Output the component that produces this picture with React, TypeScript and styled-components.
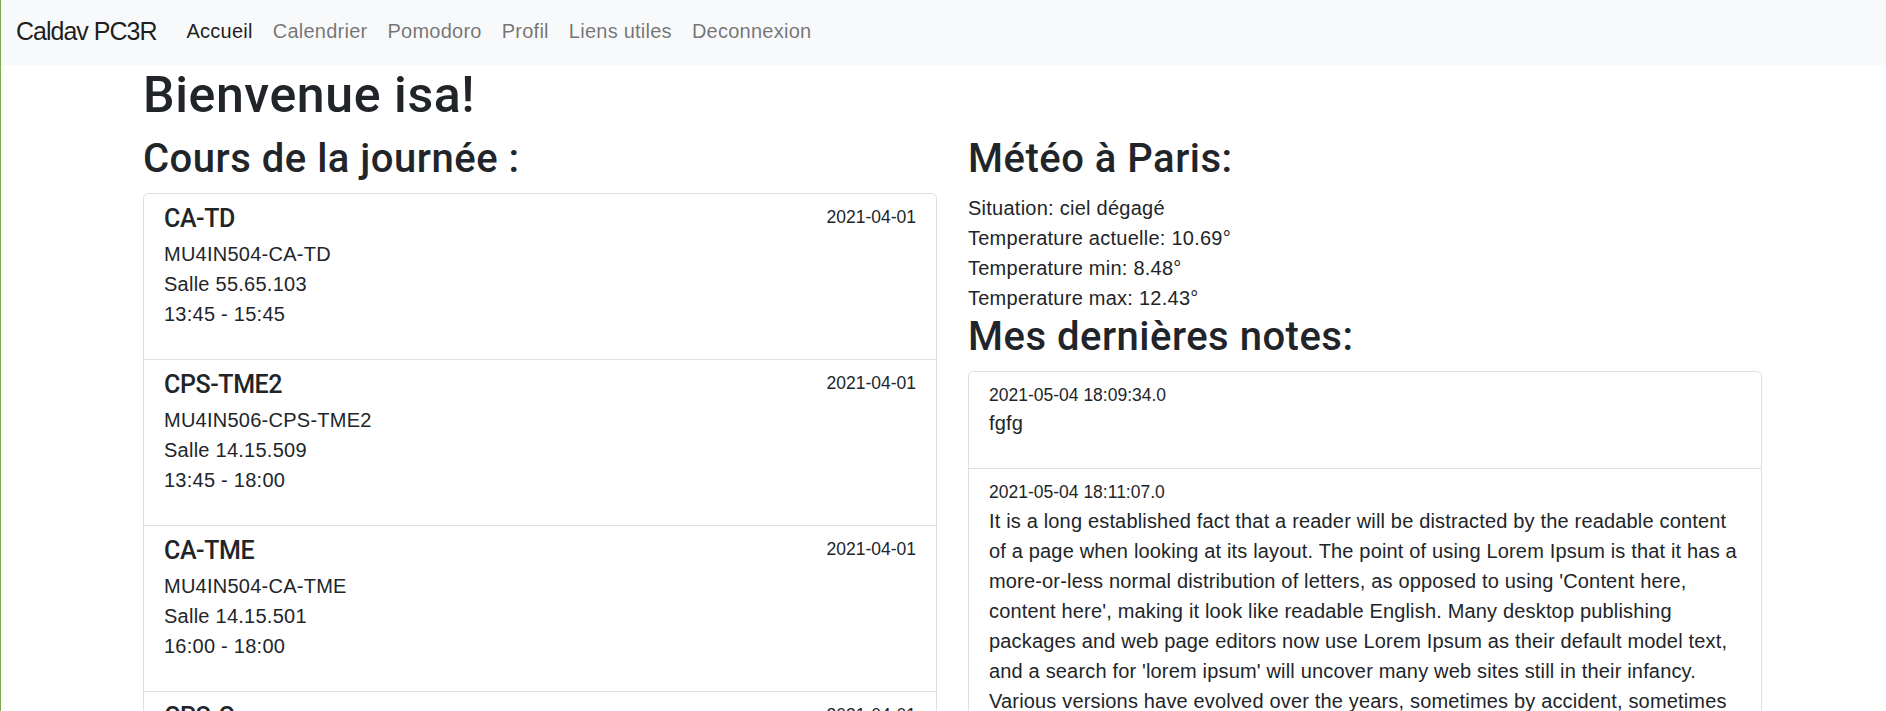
import React from "react";
import styled, { createGlobalStyle } from "styled-components";

const GlobalStyle = createGlobalStyle`
  html, body {
    margin: 0;
    padding: 0;
    background: #ffffff;
  }
  body {
    font-family: "Liberation Sans", Arial, sans-serif;
    font-size: 20px;
    line-height: 30px;
    letter-spacing: 0.25px;
    color: #212529;
  }
  * { box-sizing: border-box; }
`;

const Page = styled.div`
  min-height: 711px;
  border-left: 1px solid #7aab4c;
`;

const NavBar = styled.nav`
  height: 65px;
  background: #f8f9fa;
  display: flex;
  align-items: center;
  padding: 0 15px 4px;
`;

const Brand = styled.a`
  font-size: 25px;
  line-height: 30px;
  color: rgba(0, 0, 0, 0.9);
  margin-right: 20px;
  text-decoration: none;
  letter-spacing: -1px;
`;

const NavList = styled.ul`
  display: flex;
  list-style: none;
  margin: 0;
  padding: 0;
`;

const NavLink = styled.a<{ $active?: boolean }>`
  display: block;
  padding: 10px;
  font-size: 20px;
  line-height: 30px;
  color: ${(p) => (p.$active ? "rgba(0,0,0,0.9)" : "rgba(0,0,0,0.55)")};
  text-decoration: none;
`;

const Main = styled.main`
  padding-left: 142px;
`;

const Title = styled.h1`
  margin: 0 0 10px;
  font-family: Roboto, "Liberation Sans", sans-serif;
  font-weight: 500;
  font-size: 50px;
  line-height: 60px;
  letter-spacing: 0.6px;
`;

const Columns = styled.div`
  display: grid;
  grid-template-columns: 794px 794px;
  column-gap: 31px;
  align-items: start;
`;

const Column = styled.section`
  display: flex;
  flex-direction: column;
`;

const SectionTitle = styled.h2`
  margin: 0 0 10px;
  font-family: Roboto, "Liberation Sans", sans-serif;
  font-weight: 500;
  font-size: 40px;
  line-height: 48px;
  letter-spacing: 0.5px;
`;

const ListGroup = styled.div`
  border: 1px solid rgba(0, 0, 0, 0.125);
  border-radius: 5px;
  display: flex;
  flex-direction: column;
`;

const ListItem = styled.div`
  padding: 10px 20px;
  border-bottom: 1px solid rgba(0, 0, 0, 0.125);
  &:last-child { border-bottom: none; }
`;

const ItemHeader = styled.div`
  display: flex;
  justify-content: space-between;
  align-items: flex-start;
`;

const ItemTitle = styled.h5`
  margin: 0 0 5px;
  font-family: Roboto, "Liberation Sans", sans-serif;
  font-weight: 500;
  font-size: 25px;
  line-height: 30px;
  letter-spacing: -0.4px;
`;

const Small = styled.small`
  display: block;
  font-size: 17.5px;
  line-height: 26.25px;
  letter-spacing: 0;
`;

const Para = styled.p`
  margin: 0 0 20px;
`;

const NoteText = styled(Para)`
  letter-spacing: 0.17px;
`;

const InfoLine = styled.p`
  margin: 0;
`;

const courses = [
  { title: "CA-TD", code: "MU4IN504-CA-TD", room: "Salle 55.65.103", time: "13:45 - 15:45" },
  { title: "CPS-TME2", code: "MU4IN506-CPS-TME2", room: "Salle 14.15.509", time: "13:45 - 18:00" },
  { title: "CA-TME", code: "MU4IN504-CA-TME", room: "Salle 14.15.501", time: "16:00 - 18:00" },
  { title: "CPS-Cours", code: "MU4IN506-CPS-Cours", room: "Salle 14.15.101", time: "08:30 - 10:30" },
];

const notes = [
  { date: "2021-05-04 18:09:34.0", text: "fgfg" },
  {
    date: "2021-05-04 18:11:07.0",
    text:
      "It is a long established fact that a reader will be distracted by the readable content of a page when looking at its layout. The point of using Lorem Ipsum is that it has a more-or-less normal distribution of letters, as opposed to using 'Content here, content here', making it look like readable English. Many desktop publishing packages and web page editors now use Lorem Ipsum as their default model text, and a search for 'lorem ipsum' will uncover many web sites still in their infancy. Various versions have evolved over the years, sometimes by accident, sometimes on purpose (injected humour and the like).",
  },
];

export default function App() {
  return (
    <>
      <GlobalStyle />
      <Page>
        <NavBar>
          <Brand href="#">Caldav PC3R</Brand>
          <NavList>
            <li><NavLink $active href="#">Accueil</NavLink></li>
            <li><NavLink href="#">Calendrier</NavLink></li>
            <li><NavLink href="#">Pomodoro</NavLink></li>
            <li><NavLink href="#">Profil</NavLink></li>
            <li><NavLink href="#">Liens utiles</NavLink></li>
            <li><NavLink href="#">Deconnexion</NavLink></li>
          </NavList>
        </NavBar>
        <Main>
          <Title>Bienvenue isa!</Title>
          <Columns>
            <Column>
              <SectionTitle>Cours de la journée :</SectionTitle>
              <ListGroup>
                {courses.map((c) => (
                  <ListItem key={c.title}>
                    <ItemHeader>
                      <ItemTitle>{c.title}</ItemTitle>
                      <Small>2021-04-01</Small>
                    </ItemHeader>
                    <Para>
                      {c.code}
                      <br />
                      {c.room}
                      <br />
                      {c.time}
                    </Para>
                  </ListItem>
                ))}
              </ListGroup>
            </Column>
            <Column>
              <SectionTitle>Météo à Paris:</SectionTitle>
              <InfoLine>Situation: ciel dégagé</InfoLine>
              <InfoLine>Temperature actuelle: 10.69°</InfoLine>
              <InfoLine>Temperature min: 8.48°</InfoLine>
              <InfoLine>Temperature max: 12.43°</InfoLine>
              <SectionTitle>Mes dernières notes:</SectionTitle>
              <ListGroup>
                {notes.map((n) => (
                  <ListItem key={n.date}>
                    <Small>{n.date}</Small>
                    <NoteText>{n.text}</NoteText>
                  </ListItem>
                ))}
              </ListGroup>
            </Column>
          </Columns>
        </Main>
      </Page>
    </>
  );
}
